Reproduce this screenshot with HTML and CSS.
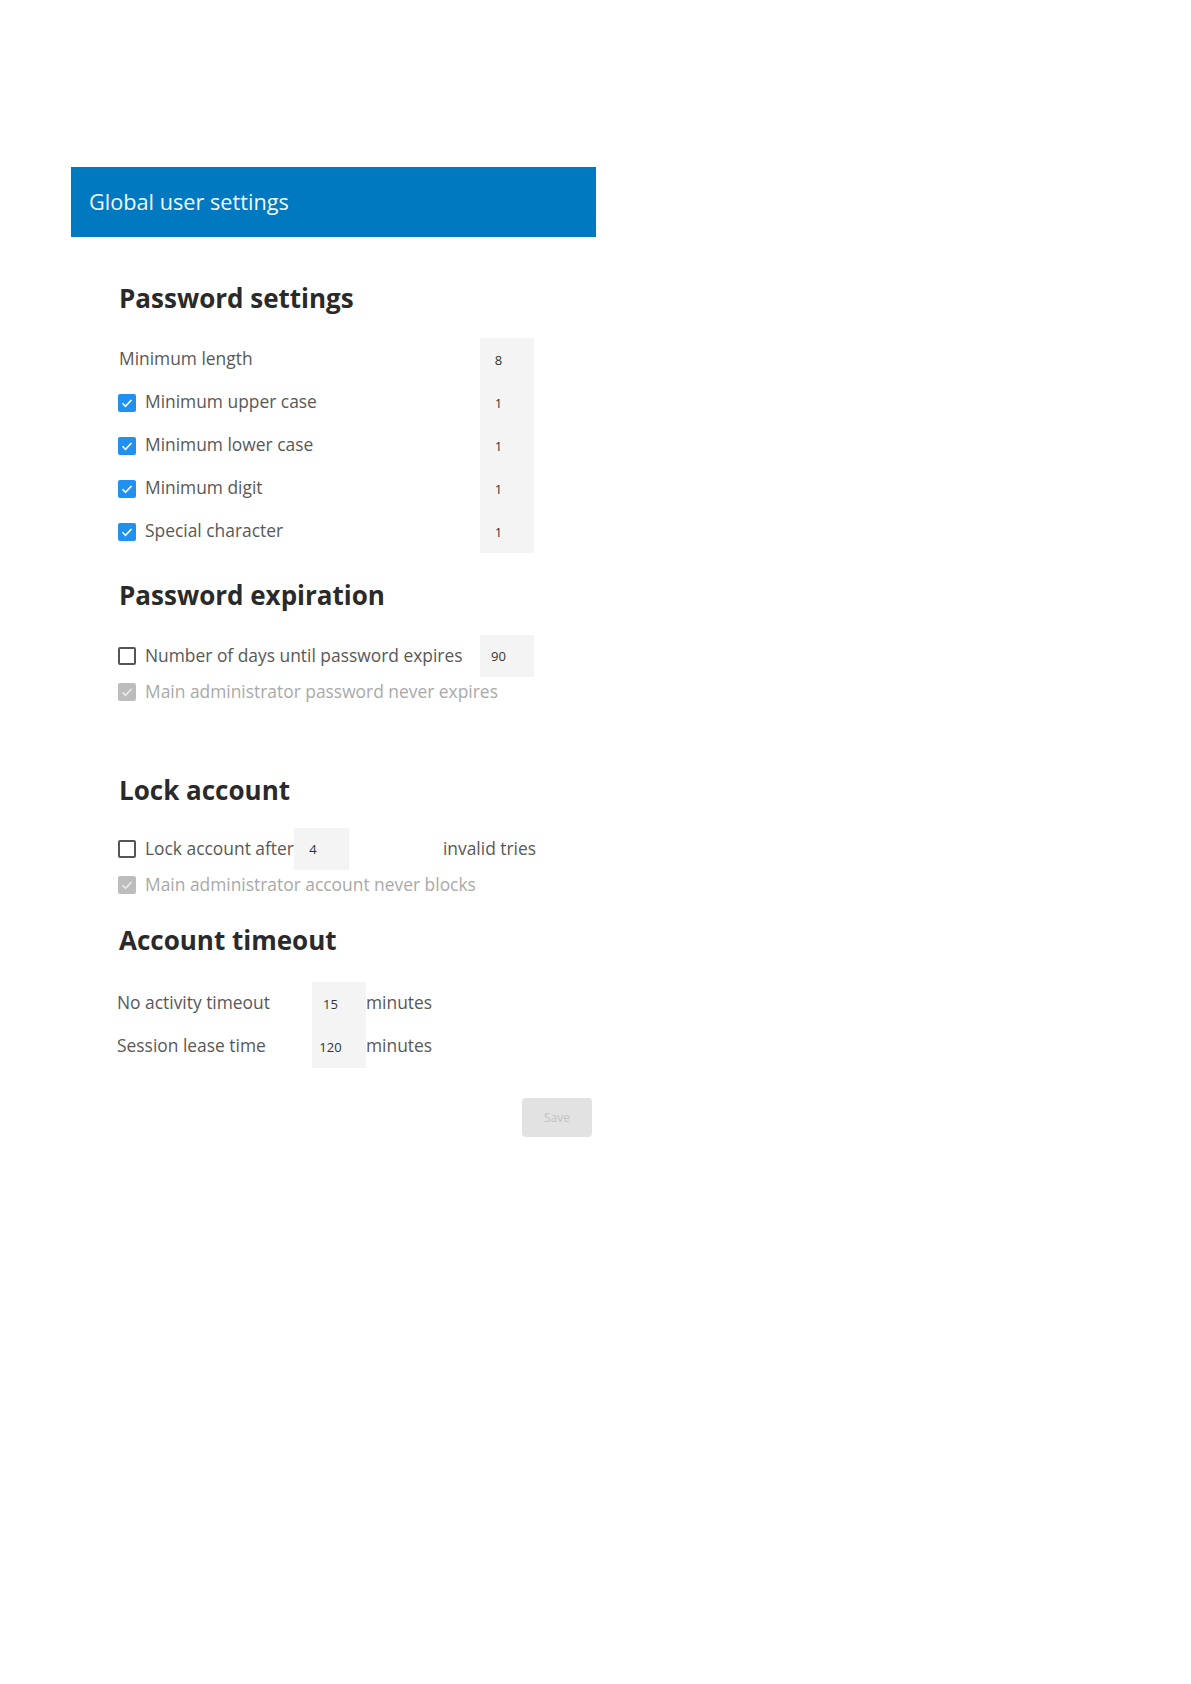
FILE: index.html
```html
<!DOCTYPE html>
<html>
	<head>
		<title>Global user settings</title>
		<link rel="stylesheet" href="styles.css">
	</head>
	<body>
		<div class="page">
			<div class="banner">Global user settings</div>

			<div class="form">
				<!-- password rules -->
				<h2 class="head first">Password settings</h2>
				<div class="rows">
					<div class="row">
						<span class="label wide">Minimum length</span>
						<input class="num" type="text" value="8">
					</div>
					<div class="row">
						<span class="box on"><svg viewBox="0 0 18 18"><path d="M4.5 9.3l3 3 6-6.3"/></svg></span>
						<span class="label wide short">Minimum upper case</span>
						<input class="num" type="text" value="1">
					</div>
					<div class="row">
						<span class="box on"><svg viewBox="0 0 18 18"><path d="M4.5 9.3l3 3 6-6.3"/></svg></span>
						<span class="label wide short">Minimum lower case</span>
						<input class="num" type="text" value="1">
					</div>
					<div class="row">
						<span class="box on"><svg viewBox="0 0 18 18"><path d="M4.5 9.3l3 3 6-6.3"/></svg></span>
						<span class="label wide short">Minimum digit</span>
						<input class="num" type="text" value="1">
					</div>
					<div class="row">
						<span class="box on"><svg viewBox="0 0 18 18"><path d="M4.5 9.3l3 3 6-6.3"/></svg></span>
						<span class="label wide short">Special character</span>
						<input class="num" type="text" value="1">
					</div>
				</div>

				<h2 class="head expire">Password expiration</h2>
				<div class="row tight first-row">
					<span class="box"></span>
					<span class="label wide short">Number of days until password expires</span>
					<input class="num" type="text" value="90">
				</div>
				<div class="row small">
					<span class="box off"><svg viewBox="0 0 18 18"><path d="M4.5 9.3l3 3 6-6.3"/></svg></span>
					<span class="label dim">Main administrator password never expires</span>
				</div>

				<h2 class="head lock">Lock account</h2>
				<div class="row tight lock-row">
					<span class="box"></span>
					<span class="label">Lock account after</span>
					<input class="num" type="text" value="4">
					<span class="label tries">invalid tries</span>
				</div>
				<div class="row small">
					<span class="box off"><svg viewBox="0 0 18 18"><path d="M4.5 9.3l3 3 6-6.3"/></svg></span>
					<span class="label dim">Main administrator account never blocks</span>
				</div>

				<h2 class="head timeout">Account timeout</h2>
				<div class="rows timeout-rows">
					<div class="row">
						<span class="label mid">No activity timeout</span>
						<input class="num" type="text" value="15">
						<span class="label">minutes</span>
					</div>
					<div class="row">
						<span class="label mid">Session lease time</span>
						<input class="num" type="text" value="120">
						<span class="label">minutes</span>
					</div>
				</div>

				<div class="actions">
					<button class="save" disabled>Save</button>
				</div>
			</div>
		</div>
	</body>
</html>
```

FILE: styles.css
```css
body
{
	margin: 0;
	background: #ffffff;
	font-family: "Open Sans", "Noto Sans", sans-serif;
}

.page
{
	width: 525px;
	margin-left: 71px;
	padding-top: 167px;
}

.banner
{
	height: 70px;
	line-height: 70px;
	padding-left: 18px;
	background: #0079c1;
	color: #f2f8fc;
	font-size: 21.7px;
}

.form
{
	padding-left: 48px;
	padding-right: 4px;
}

.head
{
	margin: 0;
	font-size: 26px;
	line-height: 32px;
	font-weight: 700;
	color: #2a2a2a;
}
.head.first
{
	margin-top: 45px;
}
.head.expire
{
	margin-top: 26px;
}
.head.lock
{
	margin-top: 67px;
}
.head.timeout
{
	margin-top: 24px;
}

.rows
{
	margin-top: 24px;
}
.timeout-rows
{
	margin-top: 26px;
	margin-left: -2px;
}

.row
{
	display: flex;
	align-items: center;
	height: 43px;
}
.row.tight
{
	height: 42px;
}
.row.small
{
	height: 30px;
}
.first-row
{
	margin-top: 24px;
}
.lock-row
{
	margin-top: 22px;
}

.label
{
	font-size: 17.4px;
	line-height: 22px;
	padding-bottom: 3px;
	color: #585858;
	white-space: nowrap;
}
.label.wide
{
	width: 361px;
}
.label.short
{
	width: 335px;
}
.label.mid
{
	width: 195px;
}
.label.dim
{
	color: #a9a9a9;
}
.label.tries
{
	margin-left: 94px;
}

.box
{
	box-sizing: border-box;
	width: 18px;
	height: 18px;
	margin-left: -1px;
	margin-right: 9px;
	border: 2px solid #555555;
	border-radius: 2px;
	flex: none;
}
.box svg
{
	display: block;
	width: 18px;
	height: 18px;
	fill: none;
	stroke: #ffffff;
	stroke-width: 1.6;
}
.box.on,
.box.off
{
	border: none;
	background: #2191f0;
}
.box.off
{
	background: #bdbdbd;
}
.box.off svg
{
	stroke: #ececec;
}

.num
{
	box-sizing: border-box;
	width: 54px;
	height: 100%;
	padding: 0 17px 0 0;
	border: none;
	outline: none;
	background: #f4f4f4;
	font: 13px "Open Sans", sans-serif;
	color: #333333;
	text-align: center;
	flex: none;
}
.lock-row .num
{
	width: 55px;
}

.actions
{
	display: flex;
	justify-content: flex-end;
	margin-top: 30px;
}
.save
{
	width: 70px;
	height: 39px;
	border: none;
	border-radius: 4px;
	background: #e2e2e2;
	color: #c2c2c2;
	font: 12px "Open Sans", sans-serif;
}
```
